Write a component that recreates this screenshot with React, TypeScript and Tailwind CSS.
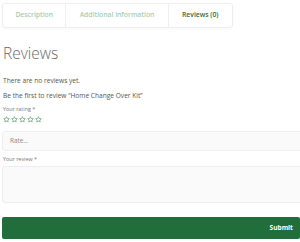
import { FC } from "react"

const Star: FC = () => (
    <svg viewBox="0 0 24 24" className="h-[7px] w-[7px]" fill="none" stroke="#3f8a52" strokeWidth="2" strokeLinejoin="round">
        <path d="M12 2.5l2.9 6.1 6.6.8-4.9 4.6 1.3 6.6L12 17.3l-5.9 3.3 1.3-6.6-4.9-4.6 6.6-.8z" />
    </svg>
)

const tabs = [
    { label: "Description", active: false },
    { label: "Additional information", active: false },
    { label: "Reviews (0)", active: true },
]

export default function App() {
    return (
        <div className="w-[300px] h-[242px] overflow-hidden bg-white text-[#555]" style={{ fontFamily: '"Open Sans", sans-serif' }}>
            <div className="ml-[2px] mt-[3px] flex h-[25px] w-[231px] rounded-[3px] border border-[#eeeeee] shadow-[0_1px_2px_rgba(0,0,0,0.03)]">
                {tabs.map((t, i) => (
                    <div key={t.label}
                        className={`flex items-center justify-center whitespace-nowrap text-[6.8px] font-semibold ${i < tabs.length - 1 ? "border-r border-[#f0f0f0]" : ""} ${t.active ? "text-[#2f6b3f]" : "text-[#a9cdb2]"} ${i === 1 ? "w-[103px]" : "w-[64px]"}`}>
                        {t.label}
                    </div>
                ))}
            </div>

            <div className="pl-[3px]">
                <h2 className="mt-[15px] text-[15.5px] leading-[20px] font-light text-[#6a6a6a]">Reviews</h2>
                <p className="mt-[13px] whitespace-nowrap text-[6.6px] leading-[9px]">There are no reviews yet.</p>
                <p className="mt-[6px] whitespace-nowrap text-[6.6px] leading-[9px]">Be the first to review “Home Change Over Kit”</p>
                <p className="mt-[6px] text-[5.4px] leading-[7px] text-[#777]">Your rating *</p>
                <div className="mt-[3px] flex gap-[1px]">
                    <Star /><Star /><Star /><Star /><Star />
                </div>
            </div>

            <div className="ml-[2px] mt-[8px] flex h-[20px] w-[310px] items-center rounded-[3px] border border-[#eeeeee] bg-[#fafafa] px-[7px] text-[6.4px] text-[#888]">
                Rate…
            </div>
            <p className="ml-[3px] mt-[5px] text-[5.4px] leading-[7px] text-[#777]">Your review *</p>
            <div className="ml-[2px] mt-[3px] h-[37px] w-[310px] rounded-[3px] border border-[#eeeeee] bg-[#fafafa]" />

            <div className="ml-[2px] mt-[14px] flex h-[22px] w-[298px] items-center justify-end rounded-[2px] bg-[#216d3b] pr-[7px] text-[6.6px] font-bold text-white">
                Submit
            </div>
        </div>
    )
}
